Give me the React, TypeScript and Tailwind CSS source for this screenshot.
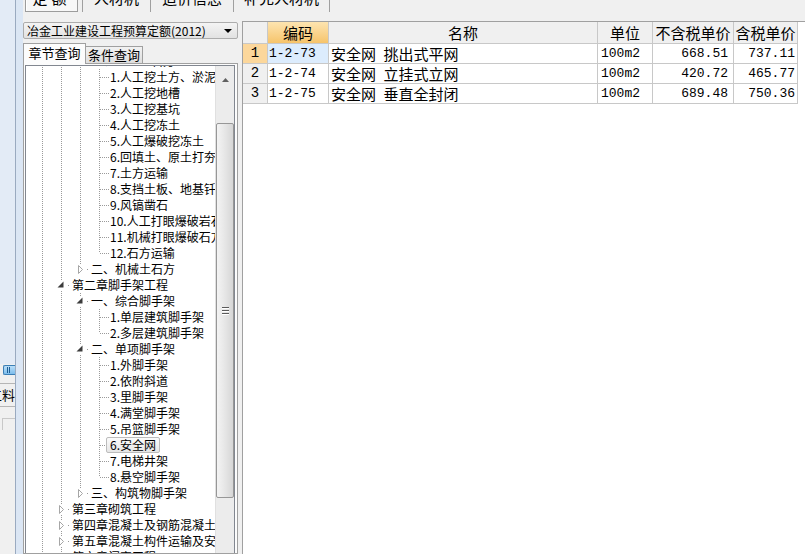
import React from "react";

type Kind = "leaf" | "open" | "closed";

interface TreeRow {
  level: number;
  text: string;
  kind: Kind;
  selected?: boolean;
}

const treeRows: TreeRow[] = [
  { level: 2, text: "一、人工土石方", kind: "open" },
  { level: 3, text: "1.人工挖土方、淤泥、流砂", kind: "leaf" },
  { level: 3, text: "2.人工挖地槽", kind: "leaf" },
  { level: 3, text: "3.人工挖基坑", kind: "leaf" },
  { level: 3, text: "4.人工挖冻土", kind: "leaf" },
  { level: 3, text: "5.人工爆破挖冻土", kind: "leaf" },
  { level: 3, text: "6.回填土、原土打夯", kind: "leaf" },
  { level: 3, text: "7.土方运输", kind: "leaf" },
  { level: 3, text: "8.支挡土板、地基钎探", kind: "leaf" },
  { level: 3, text: "9.风镐凿石", kind: "leaf" },
  { level: 3, text: "10.人工打眼爆破岩石", kind: "leaf" },
  { level: 3, text: "11.机械打眼爆破石方", kind: "leaf" },
  { level: 3, text: "12.石方运输", kind: "leaf" },
  { level: 2, text: "二、机械土石方", kind: "closed" },
  { level: 1, text: "第二章脚手架工程", kind: "open" },
  { level: 2, text: "一、综合脚手架", kind: "open" },
  { level: 3, text: "1.单层建筑脚手架", kind: "leaf" },
  { level: 3, text: "2.多层建筑脚手架", kind: "leaf" },
  { level: 2, text: "二、单项脚手架", kind: "open" },
  { level: 3, text: "1.外脚手架", kind: "leaf" },
  { level: 3, text: "2.依附斜道", kind: "leaf" },
  { level: 3, text: "3.里脚手架", kind: "leaf" },
  { level: 3, text: "4.满堂脚手架", kind: "leaf" },
  { level: 3, text: "5.吊篮脚手架", kind: "leaf" },
  { level: 3, text: "6.安全网", kind: "leaf", selected: true },
  { level: 3, text: "7.电梯井架", kind: "leaf" },
  { level: 3, text: "8.悬空脚手架", kind: "leaf" },
  { level: 2, text: "三、构筑物脚手架", kind: "closed" },
  { level: 1, text: "第三章砌筑工程", kind: "closed" },
  { level: 1, text: "第四章混凝土及钢筋混凝土工程", kind: "closed" },
  { level: 1, text: "第五章混凝土构件运输及安装工程", kind: "closed" },
  { level: 1, text: "第六章门窗工程", kind: "closed" },
  { level: 1, text: "第七章木结构工程", kind: "closed" },
];

const items = [
  { no: 1, code: "1-2-73", name: "安全网\u2002挑出式平网", unit: "100m2", price: "668.51", taxed: "737.11" },
  { no: 2, code: "1-2-74", name: "安全网\u2002立挂式立网", unit: "100m2", price: "420.72", taxed: "465.77" },
  { no: 3, code: "1-2-75", name: "安全网\u2002垂直全封闭", unit: "100m2", price: "689.48", taxed: "750.36" },
];

// is there a later row on this level before the branch closes
function hasNextAt(i: number, level: number) {
  for (let j = i + 1; j < treeRows.length; j++) {
    if (treeRows[j].level < level) return false;
    if (treeRows[j].level === level) return true;
  }
  return false;
}

const col = (c: number) => 16 + 19 * c;
const DOT = "#9a9a9a";

// dotted guide as single pixels so it stays crisp
function vdots(x: number, y0: number, y1: number, key: string) {
  const out = [];
  for (let y = y0; y < y1; y += 2) {
    out.push(<rect key={`${key}-${y}`} x={x} y={y} width={1} height={1} fill={DOT} />);
  }
  return out;
}

function TreeGuide({ i }: { i: number }) {
  const row = treeRows[i];
  const d = row.level;
  const cx = col(d);
  const parts = [];
  for (let c = 0; c < d; c++) {
    const cont = c === 0 ? true : hasNextAt(i, c);
    if (cont) parts.push(...vdots(col(c), 0, 16, `v${c}`));
  }
  parts.push(...vdots(cx, 0, 8, "up"));
  if (hasNextAt(i, d)) parts.push(...vdots(cx, 8, 16, "down"));
  if (row.kind === "leaf") {
    for (let x = cx + 1; x <= cx + 9; x += 2) {
      parts.push(<rect key={`h${x}`} x={x} y={8} width={1} height={1} fill={DOT} />);
    }
  }

  return (
    <svg width={cx + 11} height={16} className="shrink-0 block">
      {parts}
      {row.kind !== "leaf" && (
        <>
          <rect x={cx - 4} y={3} width={8} height={11} fill="#ffffff" />
          <rect x={cx + 7} y={8} width={1} height={1} fill={DOT} />
        </>
      )}
      {row.kind === "closed" && (
        <polygon
          points={`${cx - 1.5},4.5 ${cx + 2.5},8.5 ${cx - 1.5},12.5`}
          fill="#ffffff"
          stroke="#a6a6a6"
          strokeWidth={1}
        />
      )}
      {row.kind === "open" && (
        <polygon points={`${cx + 2.5},4.5 ${cx + 2.5},10.5 ${cx - 3.5},10.5`} fill="#3c3c3c" />
      )}
    </svg>
  );
}

function Tree() {
  return (
    <div className="flex-1 min-w-0 overflow-hidden bg-white">
      <div className="-mt-[13px]">
        {treeRows.map((row, i) => (
          <div key={i} className="flex h-4 items-center whitespace-nowrap text-[12px]">
            <TreeGuide i={i} />
            {row.selected ? (
              <span className="-ml-[4px] h-4 px-[3px] leading-[14px] rounded-[2px] border border-[#bcbcbc] bg-gradient-to-b from-[#fbfbfb] to-[#e6e6e6]">
                {row.text}
              </span>
            ) : (
              <span className="leading-4">{row.text}</span>
            )}
          </div>
        ))}
      </div>
    </div>
  );
}

function ScrollBar() {
  return (
    <div className="w-[19px] shrink-0 flex flex-col bg-[#ececec] border-l border-[#e0e0e0]">
      <div className="h-[26px] flex items-center justify-center pt-[2px]">
        <svg width="7" height="4">
          <polygon points="3.5,0 7,4 0,4" fill="#606060" />
        </svg>
      </div>
      <div className="h-[31px]" />
      <div className="h-[375px] rounded-[2px] border border-[#979797] bg-gradient-to-r from-[#f4f4f4] via-[#e6e6e6] to-[#d6d6d6] flex flex-col items-center justify-center gap-[2px]">
        <div className="w-[7px] h-px bg-[#5a5a5a] shadow-[0_1px_0_#ffffff]" />
        <div className="w-[7px] h-px bg-[#5a5a5a] shadow-[0_1px_0_#ffffff]" />
        <div className="w-[7px] h-px bg-[#5a5a5a] shadow-[0_1px_0_#ffffff]" />
      </div>
    </div>
  );
}

const mono = "font-['Liberation_Mono','DejaVu_Sans_Mono',monospace] text-[13px]";

function Grid() {
  return (
    <div className="flex-1 bg-white border-t border-l border-[#a0a0a0]">
      <div className="flex h-[22px] text-[15px] leading-[21px]">
        <div className="w-[25px] border-r border-b border-[#c8c8c8] bg-[#f0f0f0]" />
        <div className="w-[61px] border-r border-b border-[#c8c8c8] bg-gradient-to-b from-[#fde4b0] to-[#f6c46a] text-center">
          编码
        </div>
        <div className="w-[269px] border-r border-b border-[#c8c8c8] bg-[#f0f0f0] text-center">名称</div>
        <div className="w-[55px] border-r border-b border-[#c8c8c8] bg-[#f0f0f0] text-center">单位</div>
        <div className="w-[81px] border-r border-b border-[#c8c8c8] bg-[#f0f0f0] text-center">不含税单价</div>
        <div className="w-[64px] border-r border-b border-[#c8c8c8] bg-[#f0f0f0] text-center">含税单价</div>
      </div>
      {items.map((it) => (
        <div key={it.no} className="flex h-5 leading-[19px]">
          <div
            className={`w-[25px] border-r border-b border-[#c8c8c8] text-center ${mono} text-[14px] ${
              it.no === 1 ? "bg-[#fcd79b]" : "bg-[#f0f0f0]"
            }`}
          >
            {it.no}
          </div>
          <div
            className={`w-[61px] border-r border-b border-[#c8c8c8] pl-[1px] ${mono} ${
              it.no === 1 ? "bg-[#dcecfd]" : ""
            }`}
          >
            {it.code}
          </div>
          <div className="w-[269px] border-r border-b border-[#c8c8c8] pl-[2px] text-[15px] whitespace-pre">
            {it.name}
          </div>
          <div className={`w-[55px] border-r border-b border-[#c8c8c8] pl-[3px] ${mono}`}>{it.unit}</div>
          <div className={`w-[81px] border-r border-b border-[#c8c8c8] pr-[5px] text-right ${mono}`}>
            {it.price}
          </div>
          <div className={`w-[64px] border-r border-b border-[#c8c8c8] pr-[2px] text-right ${mono}`}>
            {it.taxed}
          </div>
        </div>
      ))}
    </div>
  );
}

export default function App() {
  return (
    <div className="w-[805px] h-[554px] overflow-hidden flex bg-[#f0f0f0] text-black font-['Noto_Sans_CJK_SC','Noto_Sans',sans-serif]">
      {/* window behind, only its right edge shows */}
      <div className="w-[15px] shrink-0 flex flex-col">
        <div className="h-[364px] bg-[#e3ebf6]" />
        <div className="h-[1px]" />
        <div className="h-[10px] ml-[3px] rounded-l-[2px] border border-r-0 border-[#3b7fb6] bg-gradient-to-b from-[#b9def8] to-[#7dbdec] flex items-center pl-[3px] gap-[1px]">
          <div className="w-px h-[6px] bg-[#1f5f95]" />
          <div className="w-px h-[6px] bg-[#1f5f95]" />
        </div>
        <div className="h-[8px]" />
        <div className="border-t border-[#b5b5b5] h-[23px] overflow-hidden flex justify-end items-center text-[13px] whitespace-nowrap">
          工料
        </div>
        <div className="h-[12px] border-t border-[#b5b5b5]" />
        <div className="h-[12px] border-t border-l border-[#c8c8c8] ml-[2px]" />
      </div>
      <div className="w-px shrink-0 bg-[#9aaac0]" />
      <div className="w-[7px] shrink-0 bg-[#dbe6f4]" />

      <div className="flex-1 min-w-0 flex flex-col">
        {/* top tabs, scrolled mostly out of view */}
        <div className="h-[21px] flex items-start text-[15px] leading-[15px] whitespace-nowrap">
          <div className="w-[60px] h-[12px] border-r border-[#a0a0a0] flex">
            <div className="ml-[2px] w-[53px] h-[12px] border-x border-b border-[#9c9c9c] bg-[#f7f7f7] shadow-[inset_1px_0_0_#ffffff] flex justify-center">
              <span className="block -mt-[10px] tracking-[4px]">定额</span>
            </div>
          </div>
          <div className="w-[68px] h-[12px] border-r border-[#a0a0a0] flex justify-center">
            <span className="block -mt-[10px]">人材机</span>
          </div>
          <div className="w-[83px] h-[12px] border-r border-[#a0a0a0] flex justify-center">
            <span className="block -mt-[10px]">造价信息</span>
          </div>
          <div className="w-[96px] h-[12px] border-r border-[#a0a0a0] flex justify-center">
            <span className="block -mt-[10px]">补充人材机</span>
          </div>
        </div>

        <div className="flex-1 min-h-0 flex">
          {/* left query panel */}
          <div className="w-[215px] shrink-0 flex flex-col">
            <div className="mt-[1px] h-[17px] rounded-[2px] border border-[#acacac] bg-gradient-to-b from-[#f4f4f4] to-[#e2e2e2] flex items-center pl-[3px] pr-[5px] text-[12px] leading-[15px]">
              <span className="flex-1 whitespace-nowrap">冶金工业建设工程预算定额(2012)</span>
              <svg width="8" height="4">
                <polygon points="0,0 8,0 4,4" fill="#000000" />
              </svg>
            </div>

            <div className="mt-[4px] h-[20px] flex items-end text-[13px] leading-[16px]">
              <div className="relative z-10 -mb-px w-[63px] h-[21px] border border-b-0 border-[#a0a0a0] bg-[#fcfcfc] flex justify-center pt-[1px]">
                章节查询
              </div>
              <div className="w-[57px] h-[17px] border border-l-0 border-b-0 border-[#a0a0a0] bg-gradient-to-b from-[#f2f2f2] to-[#dedede] flex justify-center">
                条件查询
              </div>
            </div>

            <div className="flex-1 min-h-0 flex border border-[#a0a0a0] bg-[#fcfcfc] pl-px pr-[2px] pt-px">
              <div className="flex-1 min-w-0 flex border border-[#828790] border-b-0">
                <Tree />
                <ScrollBar />
              </div>
            </div>
          </div>

          <div className="w-[4px] shrink-0" />
          <Grid />
        </div>
      </div>
    </div>
  );
}
